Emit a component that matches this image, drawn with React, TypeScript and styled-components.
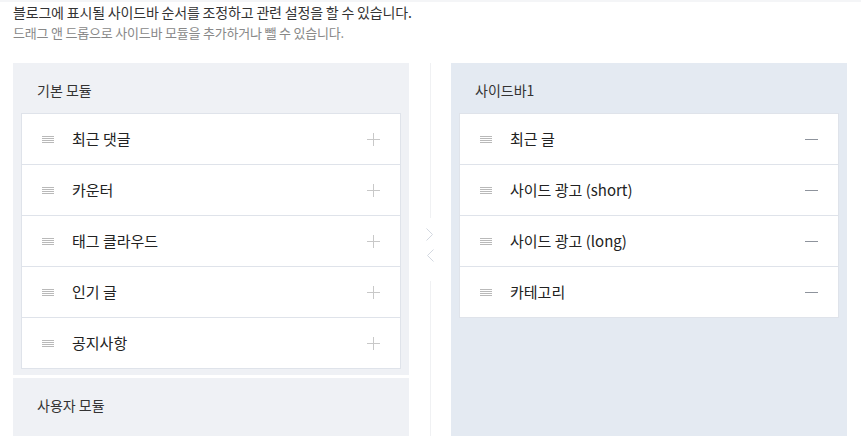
import styled, { createGlobalStyle } from 'styled-components';

const GlobalStyle = createGlobalStyle`
  body {
    margin: 0;
    background: #fff;
    font-family: "Noto Sans CJK KR", "Noto Sans", sans-serif;
    color: #222;
  }
`;

const TopLine = styled.div`
  height: 2px;
  background: #f4f5f7;
`;

const Page = styled.div`
  padding: 0 13px;
  width: 834px;
`;

const Desc = styled.p`
  margin: 0;
  font-size: 14px;
  letter-spacing: -0.18px;
  line-height: 20px;
  color: #333;
`;

const SubDesc = styled.p`
  margin: 1px 0 20px;
  font-size: 13px;
  letter-spacing: -0.2px;
  line-height: 20px;
  color: #888;
`;

const Columns = styled.div`
  display: flex;
  height: 373px;
`;

const Column = styled.div`
  width: 396px;
  display: flex;
  flex-direction: column;
  gap: 3px;
`;

const Panel = styled.section<{ $tone: 'gray' | 'blue'; $grow?: boolean }>`
  background: ${(p) => (p.$tone === 'blue' ? '#e4eaf2' : '#eff1f5')};
  padding: 0 8px 6px 8px;
  flex: ${(p) => (p.$grow ? '1' : 'none')};
  min-height: 0;
  overflow: hidden;
`;

const PanelTitle = styled.h3`
  margin: 0;
  padding: 17px 16px 13px;
  font-size: 14px;
  line-height: 20px;
  font-weight: 400;
  color: #333;
`;

const List = styled.ul`
  margin: 0;
  padding: 0;
  list-style: none;
  background: #fff;
  border: 1px solid #dfe3ea;
`;

const Row = styled.li`
  display: flex;
  align-items: center;
  height: 50px;
  padding: 0 20px 0 20px;
  & + & {
    border-top: 1px solid #dfe3ea;
  }
`;

const Handle = styled.span`
  width: 12px;
  display: flex;
  flex-direction: column;
  gap: 1px;
  margin-right: 18px;
  span {
    height: 1px;
    background: #b9b9b9;
  }
`;

const Label = styled.span`
  flex: 1;
  font-size: 15px;
  line-height: 20px;
  color: #222;
`;

const Divider = styled.div`
  width: 42px;
  display: flex;
  flex-direction: column;
  align-items: center;
`;

const Line = styled.div`
  flex: 1;
  width: 1px;
  background: #f0f1f3;
`;

const Arrows = styled.div`
  display: flex;
  flex-direction: column;
  gap: 8px;
  padding: 10px 0 19px;
`;

const HandleIcon = () => (
  <Handle>
    <span />
    <span />
    <span />
    <span />
  </Handle>
);

const PlusIcon = () => (
  <svg width="13" height="13" viewBox="0 0 13 13">
    <path d="M6.5 0v13M0 6.5h13" stroke="#c8c8c8" strokeWidth="1" />
  </svg>
);

const MinusIcon = () => (
  <svg width="13" height="13" viewBox="0 0 13 13">
    <path d="M0 6.5h13" stroke="#8e939c" strokeWidth="1" />
  </svg>
);

const baseModules = ['최근 댓글', '카운터', '태그 클라우드', '인기 글', '공지사항'];
const sidebarModules = ['최근 글', '사이드 광고 (short)', '사이드 광고 (long)', '카테고리'];

function App() {
  return (
    <>
      <GlobalStyle />
      <TopLine />
      <Page>
        <Desc>블로그에 표시될 사이드바 순서를 조정하고 관련 설정을 할 수 있습니다.</Desc>
        <SubDesc>드래그 앤 드롭으로 사이드바 모듈을 추가하거나 뺄 수 있습니다.</SubDesc>
        <Columns>
          <Column>
            <Panel $tone="gray">
              <PanelTitle>기본 모듈</PanelTitle>
              <List>
                {baseModules.map((name) => (
                  <Row key={name}>
                    <HandleIcon />
                    <Label>{name}</Label>
                    <PlusIcon />
                  </Row>
                ))}
              </List>
            </Panel>
            <Panel $tone="gray" $grow>
              <PanelTitle>사용자 모듈</PanelTitle>
            </Panel>
          </Column>
          <Divider>
            <Line />
            <Arrows>
              <svg width="8" height="13" viewBox="0 0 8 13">
                <path d="M0.5 0.5l6 6-6 6" fill="none" stroke="#d3d8e0" strokeWidth="1" />
              </svg>
              <svg width="8" height="13" viewBox="0 0 8 13">
                <path d="M7.5 0.5l-6 6 6 6" fill="none" stroke="#d3d8e0" strokeWidth="1" />
              </svg>
            </Arrows>
            <Line />
          </Divider>
          <Column>
            <Panel $tone="blue" $grow>
              <PanelTitle>사이드바1</PanelTitle>
              <List>
                {sidebarModules.map((name) => (
                  <Row key={name}>
                    <HandleIcon />
                    <Label>{name}</Label>
                    <MinusIcon />
                  </Row>
                ))}
              </List>
            </Panel>
          </Column>
        </Columns>
      </Page>
    </>
  );
}

export default App;
